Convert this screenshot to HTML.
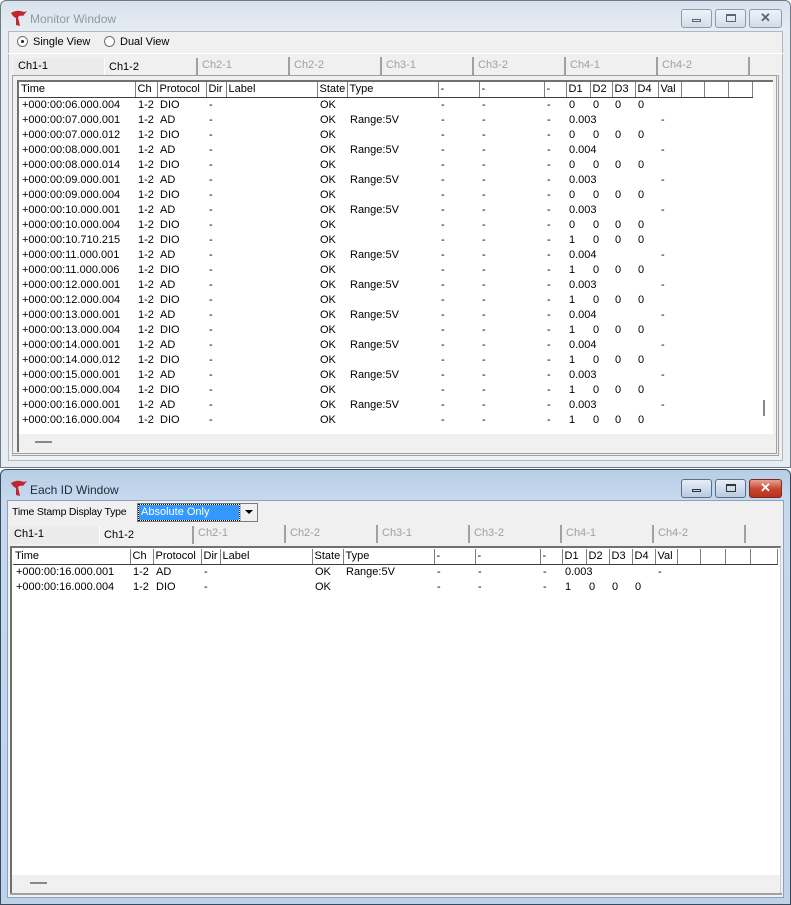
<!DOCTYPE html>
<html><head><meta charset="utf-8"><style>
*{margin:0;padding:0;box-sizing:border-box}
body{width:791px;height:905px;position:relative;overflow:hidden;background:#fff;font-family:"Liberation Sans",sans-serif;font-size:11px;color:#000}
.a{position:absolute}
.win{position:absolute;border:1px solid #555;border-radius:6px 6px 0 0}
.btn{position:absolute;top:9px;height:19px;border:1px solid #8a9bb0;border-radius:3px;background:linear-gradient(#eef3f8,#d3dde8)}
.tabs{position:absolute;height:18px}
.tab{position:absolute;top:0;height:18px;border-right:2px solid #a0a0a0;padding:2px 0 0 4px;color:#a0a0a0;font-size:11px}
table{border-collapse:collapse;table-layout:fixed;position:absolute}
td{height:15px;padding:0 0 0 3px;white-space:nowrap;overflow:hidden;line-height:15px}
tr.h td{border-right:1px solid #808080;border-bottom:1px solid #404040;height:15px;padding-left:2px}
</style></head><body>
<!-- TOP WINDOW -->
<div class="win" style="left:0;top:0;width:791px;height:468px;background:linear-gradient(#d9e2ec,#e6ecf2 30px,#e6ecf2);border-color:#6d7a88"></div>
<svg class="a" style="left:9px;top:9px" width="20" height="18" viewBox="0 0 20 18"><path d="M2 4 Q8 0 15 3 L18 2 L14 7 Q11 6 9 8 L11 17 L7 16 L7 9 Q4 8 2 4Z" fill="#c0262c"/></svg>
<div class="a" style="left:30px;top:12px;font-size:12px;color:#8d99a6">Monitor Window</div>
<div class="btn" style="left:681px;width:31px"><div class="a" style="left:10px;top:9px;width:9px;height:3px;border:1px solid #5a6472"></div></div>
<div class="btn" style="left:715px;width:31px"><div class="a" style="left:10px;top:4px;width:10px;height:8px;border:1px solid #5a6472;border-top-width:2px"></div></div>
<div class="btn" style="left:749px;width:33px;text-align:center;color:#5a6472;font-weight:bold;font-size:13px;line-height:16px">✕</div>
<div class="a" style="left:8px;top:31px;width:775px;height:430px;background:#f0f0f0;border:1px solid #b0b8c0"></div>
<div class="a" style="left:17px;top:36px;width:11px;height:11px;border:1px solid #707070;border-radius:50%;background:#fff"><div class="a" style="left:3px;top:3px;width:3px;height:3px;background:#222;border-radius:50%"></div></div>
<div class="a" style="left:33px;top:36px">Single View</div>
<div class="a" style="left:104px;top:36px;width:11px;height:11px;border:1px solid #707070;border-radius:50%;background:#fff"></div>
<div class="a" style="left:120px;top:36px">Dual View</div>
<div class="a" style="left:8px;top:53px;width:775px;height:1px;background:#fff"></div>
<div class="tabs" style="left:14px;top:57px;width:740px">
<div class="tab" style="left:0;width:91px;color:#000;border-right:1px solid #fff;background:#ebebeb;top:1px">Ch1-1</div>
<div class="tab" style="left:91px;width:93px;color:#000;top:1px;padding-top:3px">Ch1-2</div>
<div class="tab" style="left:184px;width:92px">Ch2-1</div>
<div class="tab" style="left:276px;width:92px">Ch2-2</div>
<div class="tab" style="left:368px;width:92px">Ch3-1</div>
<div class="tab" style="left:460px;width:92px">Ch3-2</div>
<div class="tab" style="left:552px;width:92px">Ch4-1</div>
<div class="tab" style="left:644px;width:92px">Ch4-2</div>
</div>
<div class="a" style="left:12px;top:75px;width:767px;height:381px;border:1px solid #a0a0a0;border-right:3px double #a0a0a0;border-bottom:3px double #a0a0a0"></div>
<div class="a" style="left:17px;top:80px;width:756px;height:355px;background:#fff;border-left:2px solid #707070;border-top:2px solid #707070"></div>
<div class="a" style="left:17px;top:434px;width:756px;height:18px;background:#f0f0f0;border-left:2px solid #707070"></div>
<div class="a" style="left:35px;top:441px;width:17px;height:2px;background:#888"></div>
<div class="a" style="left:763px;top:400px;width:2px;height:16px;background:#888"></div>
<table style="left:19px;top:82px;width:733px">
<colgroup><col style="width:116px"><col style="width:22px"><col style="width:49px"><col style="width:20px"><col style="width:91px"><col style="width:30px"><col style="width:91px"><col style="width:41px"><col style="width:65px"><col style="width:22px"><col style="width:24px"><col style="width:22px"><col style="width:23px"><col style="width:23px"><col style="width:23px"><col style="width:23px"><col style="width:24px"><col style="width:24px"></colgroup>
<tr class="h"><td>Time</td><td>Ch</td><td>Protocol</td><td>Dir</td><td>Label</td><td>State</td><td>Type</td><td>-</td><td>-</td><td>-</td><td>D1</td><td>D2</td><td>D3</td><td>D4</td><td>Val</td><td></td><td></td><td></td></tr>
<tr><td>+000:00:06.000.004</td><td>1-2</td><td>DIO</td><td>-</td><td></td><td>OK</td><td></td><td>-</td><td>-</td><td>-</td><td>0</td><td>0</td><td>0</td><td>0</td><td></td><td></td><td></td><td></td></tr>
<tr><td>+000:00:07.000.001</td><td>1-2</td><td>AD</td><td>-</td><td></td><td>OK</td><td>Range:5V</td><td>-</td><td>-</td><td>-</td><td colspan="4">0.003</td><td>-</td><td></td><td></td><td></td></tr>
<tr><td>+000:00:07.000.012</td><td>1-2</td><td>DIO</td><td>-</td><td></td><td>OK</td><td></td><td>-</td><td>-</td><td>-</td><td>0</td><td>0</td><td>0</td><td>0</td><td></td><td></td><td></td><td></td></tr>
<tr><td>+000:00:08.000.001</td><td>1-2</td><td>AD</td><td>-</td><td></td><td>OK</td><td>Range:5V</td><td>-</td><td>-</td><td>-</td><td colspan="4">0.004</td><td>-</td><td></td><td></td><td></td></tr>
<tr><td>+000:00:08.000.014</td><td>1-2</td><td>DIO</td><td>-</td><td></td><td>OK</td><td></td><td>-</td><td>-</td><td>-</td><td>0</td><td>0</td><td>0</td><td>0</td><td></td><td></td><td></td><td></td></tr>
<tr><td>+000:00:09.000.001</td><td>1-2</td><td>AD</td><td>-</td><td></td><td>OK</td><td>Range:5V</td><td>-</td><td>-</td><td>-</td><td colspan="4">0.003</td><td>-</td><td></td><td></td><td></td></tr>
<tr><td>+000:00:09.000.004</td><td>1-2</td><td>DIO</td><td>-</td><td></td><td>OK</td><td></td><td>-</td><td>-</td><td>-</td><td>0</td><td>0</td><td>0</td><td>0</td><td></td><td></td><td></td><td></td></tr>
<tr><td>+000:00:10.000.001</td><td>1-2</td><td>AD</td><td>-</td><td></td><td>OK</td><td>Range:5V</td><td>-</td><td>-</td><td>-</td><td colspan="4">0.003</td><td>-</td><td></td><td></td><td></td></tr>
<tr><td>+000:00:10.000.004</td><td>1-2</td><td>DIO</td><td>-</td><td></td><td>OK</td><td></td><td>-</td><td>-</td><td>-</td><td>0</td><td>0</td><td>0</td><td>0</td><td></td><td></td><td></td><td></td></tr>
<tr><td>+000:00:10.710.215</td><td>1-2</td><td>DIO</td><td>-</td><td></td><td>OK</td><td></td><td>-</td><td>-</td><td>-</td><td>1</td><td>0</td><td>0</td><td>0</td><td></td><td></td><td></td><td></td></tr>
<tr><td>+000:00:11.000.001</td><td>1-2</td><td>AD</td><td>-</td><td></td><td>OK</td><td>Range:5V</td><td>-</td><td>-</td><td>-</td><td colspan="4">0.004</td><td>-</td><td></td><td></td><td></td></tr>
<tr><td>+000:00:11.000.006</td><td>1-2</td><td>DIO</td><td>-</td><td></td><td>OK</td><td></td><td>-</td><td>-</td><td>-</td><td>1</td><td>0</td><td>0</td><td>0</td><td></td><td></td><td></td><td></td></tr>
<tr><td>+000:00:12.000.001</td><td>1-2</td><td>AD</td><td>-</td><td></td><td>OK</td><td>Range:5V</td><td>-</td><td>-</td><td>-</td><td colspan="4">0.003</td><td>-</td><td></td><td></td><td></td></tr>
<tr><td>+000:00:12.000.004</td><td>1-2</td><td>DIO</td><td>-</td><td></td><td>OK</td><td></td><td>-</td><td>-</td><td>-</td><td>1</td><td>0</td><td>0</td><td>0</td><td></td><td></td><td></td><td></td></tr>
<tr><td>+000:00:13.000.001</td><td>1-2</td><td>AD</td><td>-</td><td></td><td>OK</td><td>Range:5V</td><td>-</td><td>-</td><td>-</td><td colspan="4">0.004</td><td>-</td><td></td><td></td><td></td></tr>
<tr><td>+000:00:13.000.004</td><td>1-2</td><td>DIO</td><td>-</td><td></td><td>OK</td><td></td><td>-</td><td>-</td><td>-</td><td>1</td><td>0</td><td>0</td><td>0</td><td></td><td></td><td></td><td></td></tr>
<tr><td>+000:00:14.000.001</td><td>1-2</td><td>AD</td><td>-</td><td></td><td>OK</td><td>Range:5V</td><td>-</td><td>-</td><td>-</td><td colspan="4">0.004</td><td>-</td><td></td><td></td><td></td></tr>
<tr><td>+000:00:14.000.012</td><td>1-2</td><td>DIO</td><td>-</td><td></td><td>OK</td><td></td><td>-</td><td>-</td><td>-</td><td>1</td><td>0</td><td>0</td><td>0</td><td></td><td></td><td></td><td></td></tr>
<tr><td>+000:00:15.000.001</td><td>1-2</td><td>AD</td><td>-</td><td></td><td>OK</td><td>Range:5V</td><td>-</td><td>-</td><td>-</td><td colspan="4">0.003</td><td>-</td><td></td><td></td><td></td></tr>
<tr><td>+000:00:15.000.004</td><td>1-2</td><td>DIO</td><td>-</td><td></td><td>OK</td><td></td><td>-</td><td>-</td><td>-</td><td>1</td><td>0</td><td>0</td><td>0</td><td></td><td></td><td></td><td></td></tr>
<tr><td>+000:00:16.000.001</td><td>1-2</td><td>AD</td><td>-</td><td></td><td>OK</td><td>Range:5V</td><td>-</td><td>-</td><td>-</td><td colspan="4">0.003</td><td>-</td><td></td><td></td><td></td></tr>
<tr><td>+000:00:16.000.004</td><td>1-2</td><td>DIO</td><td>-</td><td></td><td>OK</td><td></td><td>-</td><td>-</td><td>-</td><td>1</td><td>0</td><td>0</td><td>0</td><td></td><td></td><td></td><td></td></tr>
</table>

<!-- BOTTOM WINDOW -->
<div class="win" style="left:0;top:469px;width:791px;height:436px;background:linear-gradient(#b7cee6,#c6d9ee 30px,#bcd3ea);border-color:#3a4a5c"></div>
<svg class="a" style="left:9px;top:479px" width="20" height="18" viewBox="0 0 20 18"><path d="M2 4 Q8 0 15 3 L18 2 L14 7 Q11 6 9 8 L11 17 L7 16 L7 9 Q4 8 2 4Z" fill="#c0262c"/></svg>
<div class="a" style="left:30px;top:483px;font-size:12px;color:#1e2a38">Each ID Window</div>
<div class="btn" style="left:681px;top:479px;width:31px;border-color:#5c6e88;background:linear-gradient(#e6eef8,#b8cbe2)"><div class="a" style="left:10px;top:9px;width:9px;height:3px;border:1px solid #333"></div></div>
<div class="btn" style="left:715px;top:479px;width:31px;border-color:#5c6e88;background:linear-gradient(#e6eef8,#b8cbe2)"><div class="a" style="left:10px;top:4px;width:10px;height:8px;border:1px solid #333;border-top-width:2px"></div></div>
<div class="btn" style="left:749px;top:479px;width:33px;border-color:#7a2a20;background:linear-gradient(#e8a394,#c8412c 55%,#b83420);text-align:center;color:#fff;font-weight:bold;font-size:13px;line-height:16px">✕</div>
<div class="a" style="left:7px;top:500px;width:777px;height:398px;background:#f0f0f0;border:1px solid #8da2ba"></div>
<div class="a" style="left:12px;top:506px;font-size:10.5px;letter-spacing:-0.2px">Time Stamp Display Type</div>
<div class="a" style="left:137px;top:503px;width:121px;height:19px;border:1px solid #7a7a7a;background:#fff"></div>
<div class="a" style="left:139px;top:505px;width:100px;height:15px;background:#3399ff;color:#fff;padding-left:2px;line-height:15px;outline:1px dotted #000">Absolute Only</div>
<div class="a" style="left:240px;top:504px;width:17px;height:17px;background:#f0f0f0;border-left:1px solid #bbb"><div class="a" style="left:4px;top:6px;border-left:4px solid transparent;border-right:4px solid transparent;border-top:4px solid #000"></div></div>
<div class="tabs" style="left:10px;top:525px;width:740px">
<div class="tab" style="left:0;width:90px;color:#000;border-right:1px solid #fff;background:#ebebeb;top:1px">Ch1-1</div>
<div class="tab" style="left:90px;width:94px;color:#000;top:1px;padding-top:3px">Ch1-2</div>
<div class="tab" style="left:184px;width:92px">Ch2-1</div>
<div class="tab" style="left:276px;width:92px">Ch2-2</div>
<div class="tab" style="left:368px;width:92px">Ch3-1</div>
<div class="tab" style="left:460px;width:92px">Ch3-2</div>
<div class="tab" style="left:552px;width:92px">Ch4-1</div>
<div class="tab" style="left:644px;width:92px">Ch4-2</div>
</div>
<div class="a" style="left:10px;top:546px;width:771px;height:348px;background:#fff;border-left:2px solid #707070;border-top:2px solid #707070;border-right:1px solid #ccc"></div>
<div class="a" style="left:12px;top:875px;width:768px;height:18px;background:#f0f0f0"></div>
<div class="a" style="left:30px;top:882px;width:17px;height:2px;background:#888"></div>
<div class="a" style="left:10px;top:893px;width:772px;height:2px;background:#a0a0a0"></div>
<table style="left:13px;top:549px;width:764px">
<colgroup><col style="width:117px"><col style="width:23px"><col style="width:48px"><col style="width:19px"><col style="width:92px"><col style="width:31px"><col style="width:91px"><col style="width:41px"><col style="width:65px"><col style="width:22px"><col style="width:24px"><col style="width:23px"><col style="width:23px"><col style="width:23px"><col style="width:22px"><col style="width:23px"><col style="width:25px"><col style="width:25px"><col style="width:27px"></colgroup>
<tr class="h"><td>Time</td><td>Ch</td><td>Protocol</td><td>Dir</td><td>Label</td><td>State</td><td>Type</td><td>-</td><td>-</td><td>-</td><td>D1</td><td>D2</td><td>D3</td><td>D4</td><td>Val</td><td></td><td></td><td></td><td></td></tr>
<tr><td>+000:00:16.000.001</td><td>1-2</td><td>AD</td><td>-</td><td></td><td>OK</td><td>Range:5V</td><td>-</td><td>-</td><td>-</td><td colspan="4">0.003</td><td>-</td><td></td><td></td><td></td><td></td></tr>
<tr><td>+000:00:16.000.004</td><td>1-2</td><td>DIO</td><td>-</td><td></td><td>OK</td><td></td><td>-</td><td>-</td><td>-</td><td>1</td><td>0</td><td>0</td><td>0</td><td></td><td></td><td></td><td></td><td></td></tr>
</table>
</body></html>
